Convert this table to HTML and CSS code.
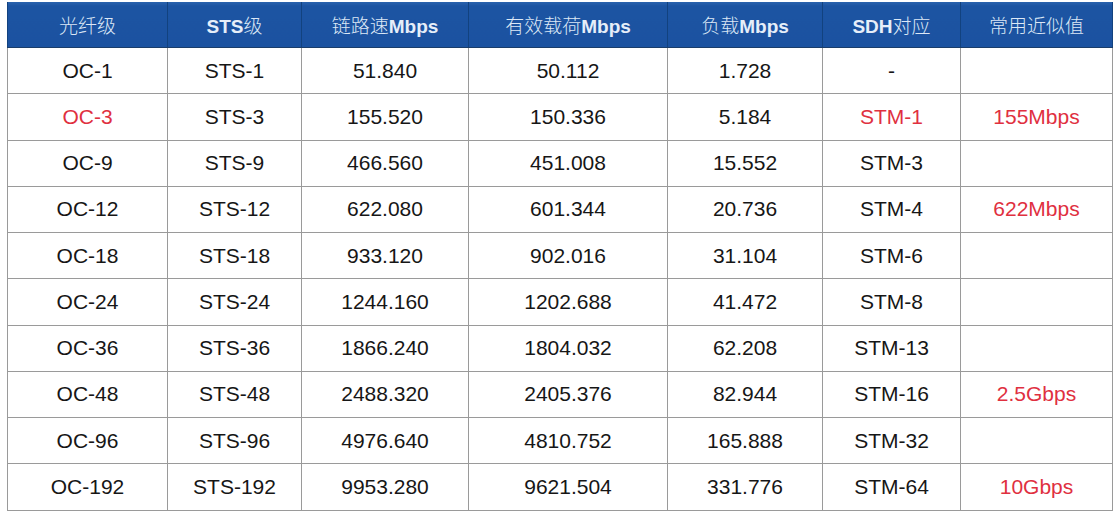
FILE: index.html
```html
<!DOCTYPE html>
<html lang="zh">
<head>
<meta charset="utf-8">
<link rel="stylesheet" href="styles.css">
</head>
<body>
<table class="sonet">
  <colgroup>
    <col class="c1"><col class="c2"><col class="c3"><col class="c4"><col class="c5"><col class="c6"><col class="c7">
  </colgroup>
  <thead>
    <tr>
      <th>光纤级</th>
      <th><b>STS</b>级</th>
      <th>链路速<b>Mbps</b></th>
      <th>有效载荷<b>Mbps</b></th>
      <th>负载<b>Mbps</b></th>
      <th><b>SDH</b>对应</th>
      <th>常用近似值</th>
    </tr>
  </thead>
  <tbody>
    <tr><td>OC-1</td><td>STS-1</td><td>51.840</td><td>50.112</td><td>1.728</td><td>-</td><td></td></tr>
    <tr><td class="red">OC-3</td><td>STS-3</td><td>155.520</td><td>150.336</td><td>5.184</td><td class="red">STM-1</td><td class="red">155Mbps</td></tr>
    <tr><td>OC-9</td><td>STS-9</td><td>466.560</td><td>451.008</td><td>15.552</td><td>STM-3</td><td></td></tr>
    <tr><td>OC-12</td><td>STS-12</td><td>622.080</td><td>601.344</td><td>20.736</td><td>STM-4</td><td class="red">622Mbps</td></tr>
    <tr><td>OC-18</td><td>STS-18</td><td>933.120</td><td>902.016</td><td>31.104</td><td>STM-6</td><td></td></tr>
    <tr><td>OC-24</td><td>STS-24</td><td>1244.160</td><td>1202.688</td><td>41.472</td><td>STM-8</td><td></td></tr>
    <tr><td>OC-36</td><td>STS-36</td><td>1866.240</td><td>1804.032</td><td>62.208</td><td>STM-13</td><td></td></tr>
    <tr><td>OC-48</td><td>STS-48</td><td>2488.320</td><td>2405.376</td><td>82.944</td><td>STM-16</td><td class="red">2.5Gbps</td></tr>
    <tr><td>OC-96</td><td>STS-96</td><td>4976.640</td><td>4810.752</td><td>165.888</td><td>STM-32</td><td></td></tr>
    <tr><td>OC-192</td><td>STS-192</td><td>9953.280</td><td>9621.504</td><td>331.776</td><td>STM-64</td><td class="red">10Gbps</td></tr>
  </tbody>
</table>
</body>
</html>
```
FILE: styles.css
```css
html, body {
  margin: 0;
  background: #ffffff;
}
body {
  padding: 2px 0 0 7px;
}
.sonet {
  border-collapse: collapse;
  table-layout: fixed;
  width: 1105px;
  font-family: "Liberation Sans", Arial, "Noto Sans CJK SC", sans-serif;
  color: #161616;
}
.c1 { width: 160px; }
.c2 { width: 134px; }
.c3 { width: 167px; }
.c4 { width: 199px; }
.c5 { width: 155px; }
.c6 { width: 138px; }
.c7 { width: 152px; }

.sonet th {
  height: 45px;
  padding: 0;
  background: linear-gradient(#2a62ad 0, #1c54a2 4px, #1b52a0 100%);
  color: #dce8f6;
  font-family: "Noto Sans CJK SC", "Liberation Sans", sans-serif;
  font-weight: 300;
  font-size: 19px;
  text-align: center;
  vertical-align: middle;
  border-left: 1px solid #12427f;
  border-right: 1px solid #12427f;
  border-bottom: 1px solid #1a3d6a;
}
.sonet th b {
  font-family: "Liberation Sans", Arial, sans-serif;
  font-weight: 700;
  font-size: 19px;
  color: #e6eef9;
}
.sonet td {
  height: 46.25px;
  padding: 0;
  box-sizing: border-box;
  font-size: 21px;
  text-align: center;
  vertical-align: middle;
  border: 1px solid #9a9a9a;
}
.sonet tbody tr {
  height: 46.25px;
}
.sonet .red {
  color: #e0303f;
}
```
